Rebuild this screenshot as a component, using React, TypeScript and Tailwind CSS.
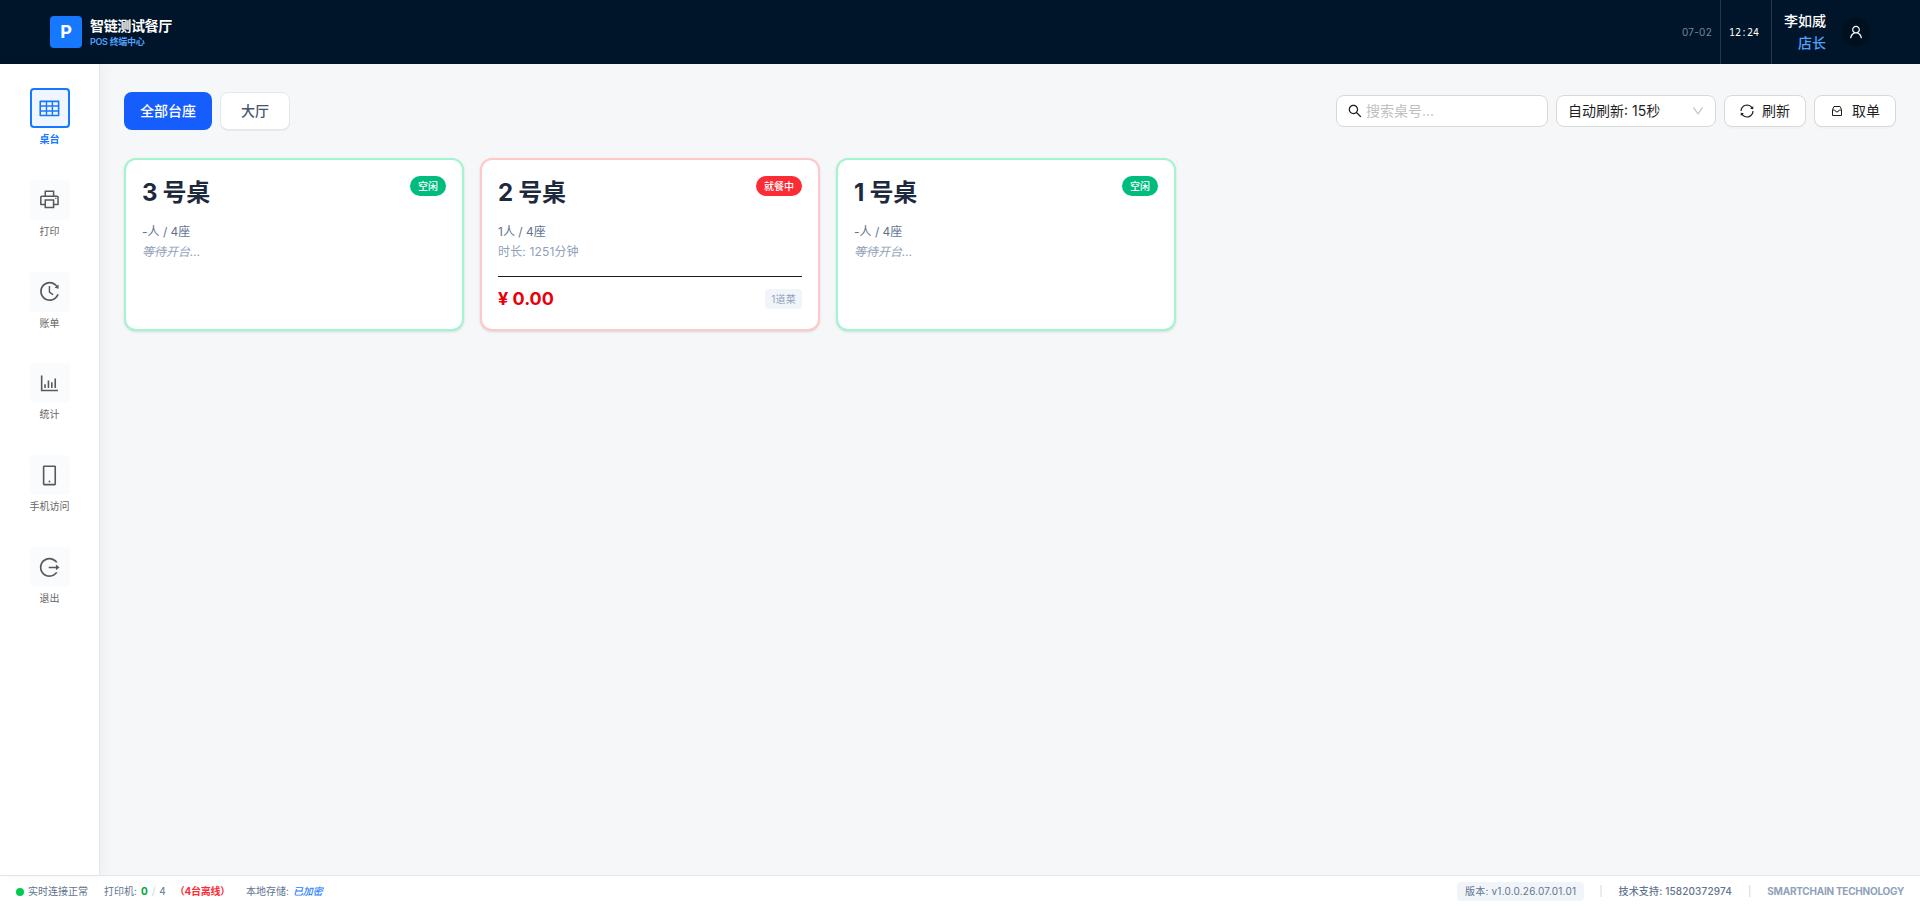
import { AiOutlineTable, AiOutlinePrinter, AiOutlineHistory, AiOutlineBarChart, AiOutlineMobile, AiOutlineLogout, AiOutlineSync, AiOutlineUser, AiOutlineSearch, AiOutlineDown } from "react-icons/ai";
import type { IconType } from "react-icons";

const navItems: { label: string; icon: IconType; active?: boolean }[] = [
  { label: "桌台", icon: AiOutlineTable, active: true },
  { label: "打印", icon: AiOutlinePrinter },
  { label: "账单", icon: AiOutlineHistory },
  { label: "统计", icon: AiOutlineBarChart },
  { label: "手机访问", icon: AiOutlineMobile },
  { label: "退出", icon: AiOutlineLogout },
];

type Table = { name: string; seats: string; busy?: boolean; duration?: string; amount?: string; dishes?: string };

const tables: Table[] = [
  { name: "3 号桌", seats: "-人 / 4座" },
  { name: "2 号桌", seats: "1人 / 4座", busy: true, duration: "时长: 1251分钟", amount: "¥ 0.00", dishes: "1道菜" },
  { name: "1 号桌", seats: "-人 / 4座" },
];

function Header() {
  return (
    <header className="flex h-16 shrink-0 items-center justify-between bg-[#001529] pl-[50px] pr-[50px]">
      <div className="flex items-center gap-2">
        <div className="flex size-8 items-center justify-center rounded bg-[#1677ff] text-lg font-bold text-white">P</div>
        <div className="flex flex-col pt-px">
          <span className="text-sm leading-[17.5px] font-bold tracking-tight text-white">智链测试餐厅</span>
          <span className="mt-px text-[9px] leading-[13.5px] font-semibold tracking-[-0.3px] text-[#51a2ff]">POS 终端中心</span>
        </div>
      </div>
      <div className="flex h-full items-center">
        <span className="pr-2 text-[10px] tracking-wide text-[#75869f]">07-02</span>
        <div className="flex h-full w-[52px] items-center border-x border-[#27384c] pl-2 font-['Noto_Sans_Mono','DejaVu_Sans_Mono',monospace] text-[10px] text-white">12:24</div>
        <div className="flex flex-col items-end pl-3 text-sm leading-[22px]">
          <span className="font-medium text-white">李如威</span>
          <span className="font-medium text-[#51a2ff]">店长</span>
        </div>
        <div className="ml-4 flex size-7 items-center justify-center rounded-full bg-[#00101f] text-white">
          <AiOutlineUser size={16} />
        </div>
      </div>
    </header>
  );
}

function Sidebar() {
  return (
    <aside className="z-10 flex w-[100px] shrink-0 flex-col items-center gap-[34.8px] border-r border-[#e2e8f0] bg-white pt-6 shadow-[4px_0_12px_rgba(0,0,0,0.04)]">
      {navItems.map(({ label, icon: Icon, active }) => (
        <div key={label} className="flex flex-col items-center gap-1">
          <div className={active ? "flex size-10 items-center justify-center rounded border-2 border-[#1677ff] bg-[#eff6ff] text-[#1677ff]" : "flex size-10 items-center justify-center rounded bg-[#fafbfc] text-[#595959]"}>
            <Icon size={22.86} className="shrink-0" />
          </div>
          <span className={active ? "mt-px text-[10px] leading-[12px] font-bold text-[#1677ff]" : "mt-px text-[10px] leading-[12px] text-[#666666]"}>{label}</span>
        </div>
      ))}
    </aside>
  );
}

function PickupIcon() {
  return (
    <svg width="12" height="12" viewBox="0 0 12 12" fill="none" stroke="currentColor" strokeWidth="1">
      <path d="M1.5 4.5v6h9v-6L9 1.5H3L1.5 4.5z" />
      <path d="M1.5 5h2.2L5 6.8h2L8.3 5h2.2" />
    </svg>
  );
}

function Toolbar() {
  return (
    <div className="flex h-[38px] items-center justify-between">
      <div className="flex gap-2">
        <button className="h-[38px] w-[88px] rounded-lg bg-[#155dfc] text-sm font-medium text-white">全部台座</button>
        <button className="h-[38px] w-[70px] rounded-lg border border-[#e2e8f0] bg-white text-sm font-medium text-[#45556c] shadow-2xs">大厅</button>
      </div>
      <div className="flex gap-2 text-sm text-[#1f1f1f]">
        <div className="flex h-8 w-[212px] items-center gap-1 rounded-lg border border-[#d9d9d9] bg-white px-[11px]">
          <AiOutlineSearch size={16} className="-m-px" />
          <span className="text-[#bfbfbf]">搜索桌号...</span>
        </div>
        <div className="flex h-8 w-40 items-center justify-between rounded-lg border border-[#d9d9d9] bg-white px-[11px]">
          <span>自动刷新: 15秒</span>
          <AiOutlineDown size={14} className="-m-px text-[#bfbfbf]" />
        </div>
        <button className="flex h-8 w-[82px] items-center justify-center gap-2 rounded-lg border border-[#d9d9d9] bg-white shadow-[0_2px_0_rgba(0,0,0,0.02)]">
          <AiOutlineSync size={16} className="-m-px" />
          刷新
        </button>
        <button className="flex h-8 w-[82px] items-center justify-center gap-2 rounded-lg border border-[#d9d9d9] bg-white shadow-[0_2px_0_rgba(0,0,0,0.02)]">
          <span className="flex w-[14px] justify-center"><PickupIcon /></span>
          取单
        </button>
      </div>
    </div>
  );
}

function TableCard({ table }: { table: Table }) {
  const { busy } = table;
  return (
    <article className={busy ? "h-[173px] w-[340px] rounded-xl border-2 border-[#ffc9c9] bg-white p-4 shadow-sm" : "h-[173px] w-[340px] rounded-xl border-2 border-[#a4f4cf] bg-white p-4 shadow-sm"}>
      <div className="flex items-start justify-between">
        <h2 className="pt-px text-2xl leading-8 font-bold tracking-[-0.3px] text-[#1d293d]">{table.name}</h2>
        <span className={busy ? "h-5 rounded-full bg-[#fb2c36] px-2 text-[10px] leading-5 font-medium text-white" : "h-5 rounded-full bg-[#00bc7d] px-2 text-[10px] leading-5 font-medium text-white"}>{busy ? "就餐中" : "空闲"}</span>
      </div>
      <p className="mt-[13px] text-xs leading-5 text-[#62748e]">{table.seats}</p>
      <p className={busy ? "text-xs leading-5 tracking-[0.15px] text-[#90a1b9]" : "text-xs leading-5 text-[#90a1b9] italic"}>{table.duration ?? "等待开台..."}</p>
      {busy && (
        <div className="mt-[14px] flex items-center justify-between border-t border-[#1c1920] pt-2">
          <span className="text-lg leading-7 font-bold text-[#e7000b]">{table.amount}</span>
          <span className="h-5 rounded bg-[#f1f5f9] px-1.5 text-[10px] leading-5 tracking-[0.2px] text-[#90a1b9]">{table.dishes}</span>
        </div>
      )}
    </article>
  );
}

function Footer() {
  return (
    <footer className="flex h-8 shrink-0 items-center justify-between border-t border-[#e2e8f0] bg-white px-4 text-[10px] text-[#62748e]">
      <div className="flex items-center">
        <i className="mr-1 size-2 rounded-full bg-[#00c950]" />
        <span>实时连接正常</span>
        <span className="ml-4">打印机:</span>
        <b className="ml-1 text-[#00a63e]">0</b>
        <span className="mx-1 text-[#cad5e2]">/</span>
        <span>4</span>
        <b className="ml-[9px] tracking-[-0.25px] text-[#fb2c36]">（4台离线）</b>
        <span className="ml-4">本地存储:</span>
        <span className="ml-1 font-medium text-[#2b7fff] italic">已加密</span>
      </div>
      <div className="flex items-center gap-4">
        <span className="-mr-px h-[19px] rounded bg-[#f1f5f9] px-2 leading-[19px] tracking-[0.2px]">版本: v1.0.0.26.07.01.01</span>
        <span className="text-[#cad5e2]">|</span>
        <span className="font-medium tracking-[0.15px]">技术支持: 15820372974</span>
        <span className="text-[#cad5e2]">|</span>
        <span className="font-bold tracking-tight text-[#90a1b9]">SMARTCHAIN TECHNOLOGY</span>
      </div>
    </footer>
  );
}

export default function App() {
  return (
    <div className="flex h-screen flex-col overflow-hidden bg-[#f5f7f9] font-['Inter','Noto_Sans_CJK_SC',sans-serif]">
      <Header />
      <div className="flex min-h-0 flex-1">
        <Sidebar />
        <main className="flex-1 px-6 pt-7">
          <Toolbar />
          <section className="mt-7 flex gap-4">
            {tables.map((t) => <TableCard key={t.name} table={t} />)}
          </section>
        </main>
      </div>
      <Footer />
    </div>
  );
}
